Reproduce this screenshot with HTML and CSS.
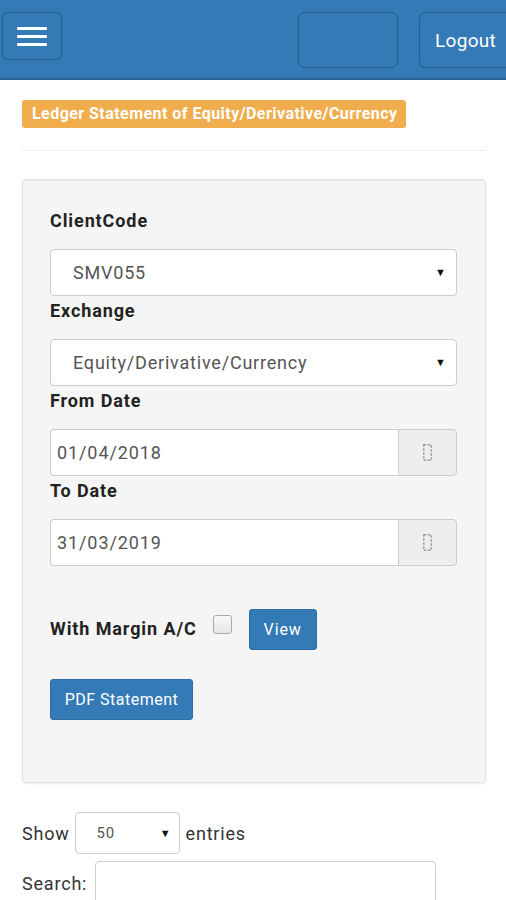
FILE: index.html
```html
<!DOCTYPE html>
<html>
<head>
<meta charset="utf-8">
<link rel="stylesheet" href="styles.css">
</head>
<body>
<header class="topbar">
  <button class="menu-btn" aria-label="menu">
    <span class="bar"></span><span class="bar"></span><span class="bar"></span>
  </button>
  <div class="spacer"></div>
  <button class="nav-btn blank"></button>
  <button class="nav-btn logout">Logout</button>
</header>
<main class="content">
  <div class="badge">Ledger Statement of Equity/Derivative/Currency</div>
  <hr class="rule">
  <section class="panel">
    <label class="field-label">ClientCode</label>
    <div class="select-box"><span class="sel-text">SMV055</span><span class="caret">▼</span></div>
    <label class="field-label">Exchange</label>
    <div class="select-box"><span class="sel-text">Equity/Derivative/Currency</span><span class="caret">▼</span></div>
    <label class="field-label">From Date</label>
    <div class="date-group">
      <div class="date-input">01/04/2018</div>
      <div class="addon"><svg width="9" height="17" viewBox="0 0 9 17"><rect x="0.75" y="0.75" width="7.5" height="15.5" fill="none" stroke="#999" stroke-width="1.4" stroke-dasharray="2.5 1.5"/></svg></div>
    </div>
    <label class="field-label">To Date</label>
    <div class="date-group">
      <div class="date-input">31/03/2019</div>
      <div class="addon"><svg width="9" height="17" viewBox="0 0 9 17"><rect x="0.75" y="0.75" width="7.5" height="15.5" fill="none" stroke="#999" stroke-width="1.4" stroke-dasharray="2.5 1.5"/></svg></div>
    </div>
    <div class="margin-row">
      <span class="margin-label">With Margin A/C</span>
      <span class="checkbox"></span>
      <button class="btn view-btn">View</button>
    </div>
    <button class="btn pdf-btn">PDF Statement</button>
  </section>
  <div class="length-row">
    <span>Show</span>
    <div class="small-select"><span>50</span><span class="caret">▼</span></div>
    <span>entries</span>
  </div>
  <div class="search-row">
    <span>Search:</span>
    <div class="search-input"></div>
  </div>
</main>
</body>
</html>
```
FILE: styles.css
```css
* { box-sizing: border-box; }
body {
  margin: 0;
  font-family: Roboto, "Liberation Sans", Arial, sans-serif;
  background: #fff;
  color: #333;
  width: 506px;
  height: 900px;
  overflow: hidden;
}
.topbar {
  display: flex;
  align-items: flex-start;
  height: 80px;
  background: #337ab7;
  border-bottom: 2px solid #2a6496;
  padding: 12px 0 0 2px;
}
.menu-btn {
  width: 60px;
  height: 48px;
  background: #337ab7;
  border: 1.5px solid #2b5f8c;
  border-radius: 5px;
  display: flex;
  flex-direction: column;
  align-items: center;
  justify-content: center;
  gap: 5px;
  padding: 0;
}
.bar {
  display: block;
  width: 30px;
  height: 3px;
  background: #fff;
  border-radius: 1px;
}
.spacer { flex: 1; }
.nav-btn {
  height: 56px;
  background: #337ab7;
  border: 1.5px solid #2b5f8c;
  border-radius: 6px;
  color: #fff;
  font-family: Roboto, "Liberation Sans", Arial, sans-serif;
  font-size: 19px;
  letter-spacing: 0.3px;
  padding: 0;
}
.blank { width: 100px; margin-right: 21px; }
.logout { width: 87px; border-right: none; border-radius: 6px 0 0 6px; text-align: left; padding-left: 15px; }
.content { padding: 20px 20px 0 22px; }
.badge {
  display: inline-block;
  background: #f0ad4e;
  color: #fff;
  font-weight: 700;
  font-size: 16px;
  letter-spacing: 0.45px;
  line-height: 28px;
  height: 28px;
  padding: 0 9px 0 10px;
  border-radius: 3px;
}
.rule {
  margin: 22px 0 28px;
  border: 0;
  border-top: 1px solid #eee;
}
.panel {
  background: #f5f5f5;
  border: 1px solid #e3e3e3;
  border-radius: 4px;
  box-shadow: inset 0 1px 1px rgba(0,0,0,0.05), 0 1px 2px rgba(0,0,0,0.08);
  padding: 26px 28px 0 27px;
  height: 604px;
  display: flex;
  flex-direction: column;
  align-items: flex-start;
}
.field-label {
  display: block;
  font-weight: 700;
  font-size: 18px;
  letter-spacing: 0.9px;
  line-height: 26px;
  padding-top: 2px;
  color: #222;
  margin-bottom: 15px;
}
.select-box {
  width: 100%;
  height: 47px;
  background: #fff;
  border: 1px solid #ccc;
  border-radius: 4px;
  display: flex;
  align-items: center;
  justify-content: space-between;
  padding: 0 10px 0 22px;
  font-size: 18px;
  letter-spacing: 0.8px;
  color: #555;
  flex-shrink: 0;
}
.caret { font-size: 11px; color: #111; letter-spacing: 0; }
.date-group {
  width: 100%;
  height: 47px;
  display: flex;
  flex-shrink: 0;
}
.date-input {
  flex: 1;
  background: #fff;
  border: 1px solid #ccc;
  border-right: none;
  border-radius: 4px 0 0 4px;
  display: flex;
  align-items: center;
  padding-left: 6px;
  font-size: 18px;
  letter-spacing: 0.9px;
  color: #555;
}
.addon {
  width: 59px;
  background: #eee;
  border: 1px solid #ccc;
  border-radius: 0 4px 4px 0;
  display: flex;
  align-items: center;
  justify-content: center;
}
.margin-row {
  display: flex;
  align-items: flex-start;
  margin-top: 43px;
}
.margin-label {
  font-weight: 700;
  font-size: 18px;
  letter-spacing: 0.9px;
  color: #222;
  margin-top: 9px;
}
.checkbox {
  width: 19px;
  height: 19px;
  border: 1px solid #aaa;
  border-radius: 3px;
  background: linear-gradient(#fafafa, #e6e6e6);
  margin: 6px 0 0 16px;
}
.btn {
  background: #337ab7;
  border: 1px solid #2e6da4;
  border-radius: 3px;
  color: #fff;
  font-family: Roboto, "Liberation Sans", Arial, sans-serif;
  font-size: 16px;
  letter-spacing: 0.5px;
  height: 41px;
  padding: 0;
}
.view-btn { width: 68px; margin-left: 17px; letter-spacing: 0.9px; }
.pdf-btn { width: 143px; margin-top: 29px; }
.length-row {
  display: flex;
  align-items: center;
  margin-top: 29px;
  font-size: 18px;
  letter-spacing: 0.8px;
  color: #333;
  gap: 5px;
}
.length-row > span:last-child { margin-left: 1px; }
.small-select {
  width: 105px;
  height: 42px;
  border: 1px solid #ccc;
  border-radius: 4px;
  display: flex;
  align-items: center;
  justify-content: space-between;
  padding: 0 8px 0 21px;
  font-size: 15px;
  color: #555;
}
.search-row {
  display: flex;
  align-items: flex-start;
  margin-top: 7px;
  font-size: 18px;
  letter-spacing: 0.8px;
  color: #333;
  gap: 8px;
}
.search-row span { margin-top: 12px; }
.search-input {
  width: 341px;
  height: 46px;
  border: 1px solid #ccc;
  border-radius: 4px;
}
```
